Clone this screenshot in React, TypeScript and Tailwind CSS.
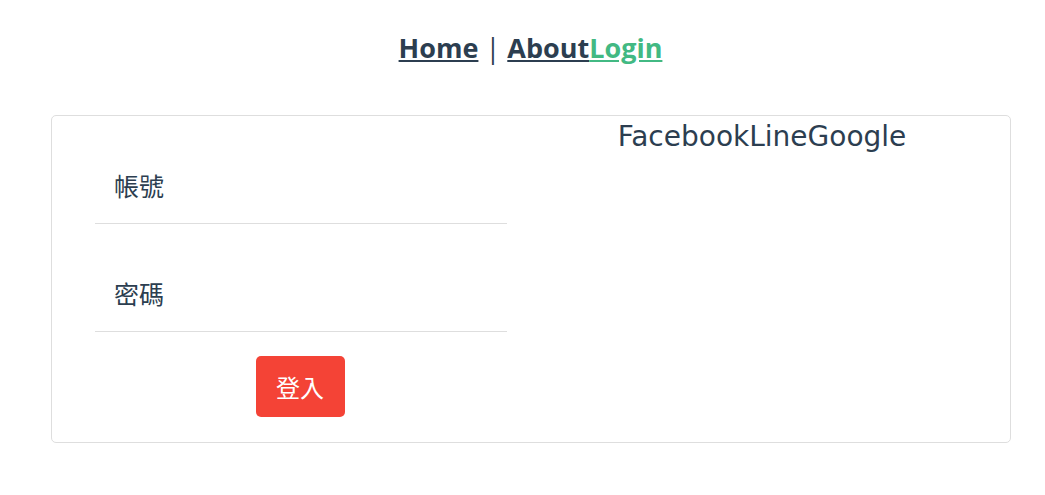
export default function App() {
  const font = { fontFamily: '"Open Sans", "Noto Sans CJK TC", sans-serif' };
  const cjk = { fontFamily: '"Noto Sans CJK TC", sans-serif' };
  return (
    <div className="min-h-[495px] bg-white text-[#2c3e50]" style={font}>
      <nav className="flex justify-center whitespace-pre pl-[16px] pt-[30px] pb-[30px] text-[27px] font-bold leading-[36px]">
        <a className="underline text-[#2c3e50]">Home</a>
        <span className="font-normal"> | </span>
        <a className="underline text-[#2c3e50]">About</a>
        <a className="underline text-[#42b983]">Login</a>
      </nav>
      <div className="ml-[51px] mt-[19px] flex h-[328px] w-[960px] rounded-[5px] border border-[#dedede] pl-[23px] pr-[13px]">
        <div className="w-[452px] px-[20px] pt-[32px]">
          <div className="flex h-[76px] items-center border-b border-[#dedede] pl-[19px] text-[25px]" style={cjk}>
            帳號
          </div>
          <div className="mt-[32px] flex h-[76px] items-center border-b border-[#dedede] pl-[19px] text-[25px]" style={cjk}>
            密碼
          </div>
          <div className="mt-[24px] flex justify-center pr-[2px]">
            <button className="h-[61px] w-[89px] rounded-[5px] bg-[#f44336] text-[24px] text-white" style={cjk}>
              登入
            </button>
          </div>
        </div>
        <div className="flex-1 pt-[3px] text-center text-[28px] leading-[36px]" style={{ fontFamily: '"DejaVu Sans", sans-serif' }}>
          FacebookLineGoogle
        </div>
      </div>
    </div>
  );
}
